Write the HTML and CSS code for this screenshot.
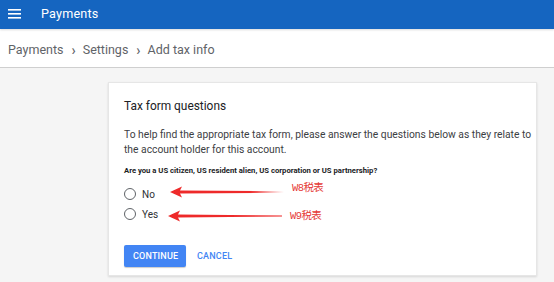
FILE: index.html
```html
<!DOCTYPE html>
<html>
<head>
<meta charset="utf-8">
<link rel="stylesheet" href="styles.css">
</head>
<body>
<header class="appbar">
  <svg class="menu" width="13" height="10" viewBox="0 0 13 10"><rect x="0" y="0" width="13" height="1.6" fill="#fff"/><rect x="0" y="4" width="13" height="1.6" fill="#fff"/><rect x="0" y="8" width="13" height="1.6" fill="#fff"/></svg>
  <span class="apptitle">Payments</span>
</header>
<nav class="crumbs">
  <span>Payments</span><span class="sep">›</span><span>Settings</span><span class="sep">›</span><span>Add tax info</span>
</nav>
<main class="content">
  <section class="card">
    <h1 class="title">Tax form questions</h1>
    <p class="desc">To help find the appropriate tax form, please answer the questions below as they relate to the account holder for this account.</p>
    <p class="question">Are you a US citizen, US resident alien, US corporation or US partnership?</p>
    <div class="options">
      <label class="opt"><span class="radio"></span>No</label>
      <label class="opt"><span class="radio"></span>Yes</label>
    </div>
    <div class="actions">
      <button class="btn primary">CONTINUE</button>
      <button class="btn flat">CANCEL</button>
    </div>
    <svg class="arrow arrow1" width="114" height="12" viewBox="0 0 114 12"><defs><linearGradient id="g1" x1="0" x2="1"><stop offset="0" stop-color="#ee2a2a"/><stop offset="0.7" stop-color="#ee2a2a"/><stop offset="1" stop-color="#ee2a2a" stop-opacity="0"/></linearGradient></defs><path d="M0 6 L12 0.5 L10 4.6 L114 5.2 L114 6.8 L10 7.4 L12 11.5 Z" fill="url(#g1)"/></svg>
    <span class="ntext ntext1">W8税表</span>
    <svg class="arrow arrow2" width="114" height="12" viewBox="0 0 114 12"><path d="M0 6 L12 0.5 L10 4.6 L114 5.5 L114 6.5 L10 7.4 L12 11.5 Z" fill="#ee2a2a"/></svg>
    <span class="ntext ntext2">W9税表</span>
  </section>
</main>
</body>
</html>
```
FILE: styles.css
```css
* { box-sizing: border-box; }
html, body { margin: 0; padding: 0; }
body {
  width: 554px;
  height: 282px;
  overflow: hidden;
  background: #f5f5f5;
  font-family: Roboto, "Noto Sans", Arial, sans-serif;
}
.appbar {
  height: 29px;
  background: #1565c0;
  display: flex;
  align-items: center;
  padding-left: 8px;
  box-shadow: 0 1px 2px rgba(0,0,0,0.15);
  position: relative;
  z-index: 2;
}
.menu { display: block; margin-top: -1px; }
.apptitle {
  color: #fff;
  font-size: 12.6px;
  margin-left: 20px;
  margin-top: -2px;
  letter-spacing: 0.2px;
}
.crumbs {
  height: 39px;
  background: #fff;
  display: flex;
  align-items: center;
  padding-left: 8px;
  padding-top: 3px;
  font-size: 12.5px;
  color: #5f6368;
  border-bottom: 1px solid #cfcfcf;
}
.sep { margin: 0 7px 0 8px; font-size: 14px; font-weight: 500; }
.content {
  padding: 14px 0 0 108px;
}
.card {
  position: relative;
  width: 429px;
  height: 194px;
  background: #fff;
  border: 1px solid #e6e6e6;
  box-shadow: 0 1px 2px rgba(0,0,0,0.12);
  padding: 14px 2px 0 15px;
}
.title {
  margin: 0;
  font-size: 11.9px;
  font-weight: 400;
  color: #202124;
  line-height: 18px;
}
.desc {
  margin: 12px 0 0 0;
  font-size: 10.3px;
  line-height: 15px;
  color: #3c4043;
}
.question {
  margin: 8px 0 0 0;
  font-size: 7.7px;
  font-weight: 700;
  color: #202124;
  line-height: 12px;
}
.options {
  display: flex;
  flex-direction: column;
  gap: 8px;
  margin-top: 11px;
}
.opt {
  display: flex;
  align-items: center;
  font-size: 10px;
  color: #303134;
  height: 12px;
}
.radio {
  width: 12px;
  height: 12px;
  border: 1.5px solid #5f6368;
  border-radius: 50%;
  margin-right: 6px;
}
.actions {
  display: flex;
  align-items: center;
  margin-top: 25px;
}
.btn {
  font-family: Roboto, Arial, sans-serif;
  font-size: 9px;
  font-weight: 500;
  border: none;
  border-radius: 2px;
  height: 22px;
  padding: 0 9px;
  cursor: pointer;
  letter-spacing: 0.2px;
}
.primary {
  background: #4285f4;
  color: #fff;
  width: 62px;
  box-shadow: 0 1px 1px rgba(0,0,0,0.2);
}
.flat {
  background: transparent;
  color: #4285f4;
  margin-left: 2px;
}
.arrow { position: absolute; display: block; }
.arrow1 { left: 61px; top: 103px; }
.arrow2 { left: 59px; top: 127px; }
.ntext {
  position: absolute;
  color: #e53935;
  font-size: 10.5px;
  line-height: 14px;
  font-family: "Liberation Mono", "Noto Sans CJK SC", monospace;
  letter-spacing: -0.6px;
}
.ntext1 { left: 183px; top: 98px; }
.ntext2 { left: 181px; top: 126px; }
```
